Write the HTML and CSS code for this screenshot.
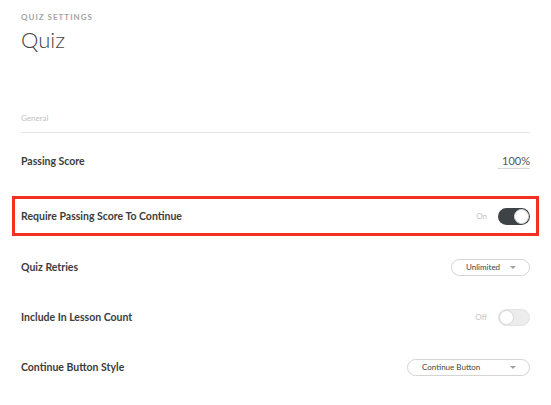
FILE: index.html
```html
<!DOCTYPE html>
<html>
<head>
<meta charset="utf-8">
<link rel="stylesheet" href="styles.css">
</head>
<body>
<div class="page">
  <header class="head">
    <div class="eyebrow">QUIZ SETTINGS</div>
    <h1 class="title">Quiz</h1>
    <div class="section">General</div>
  </header>
  <div class="row row-first">
    <span class="label">Passing Score</span>
    <span class="score">100%</span>
  </div>
  <div class="row row-highlight">
    <span class="label">Require Passing Score To Continue</span>
    <span class="switch-wrap"><span class="state">On</span><span class="toggle on"><span class="knob"></span></span></span>
  </div>
  <div class="row">
    <span class="label">Quiz Retries</span>
    <span class="select select-sm"><span>Unlimited</span><span class="caret"></span></span>
  </div>
  <div class="row">
    <span class="label">Include In Lesson Count</span>
    <span class="switch-wrap"><span class="state">Off</span><span class="toggle off"><span class="knob"></span></span></span>
  </div>
  <div class="row">
    <span class="label">Continue Button Style</span>
    <span class="select select-lg"><span>Continue Button</span><span class="caret"></span></span>
  </div>
</div>
</body>
</html>
```
FILE: styles.css
```css
html, body {
  margin: 0;
  padding: 0;
  background: #fff;
}
body {
  font-family: Lato, "Open Sans", sans-serif;
  color: #3e3e3e;
}
.page {
  display: flex;
  flex-direction: column;
  padding: 10px 21px 0 21px;
}
.head {
  display: flex;
  flex-direction: column;
  border-bottom: 1px solid #e6e6e6;
  padding-bottom: 7px;
}
.eyebrow {
  font-size: 8px;
  line-height: 14px;
  font-weight: 700;
  letter-spacing: 1px;
  color: #a3a3a3;
}
.title {
  margin: 3px 0 0 0;
  font-size: 22px;
  line-height: 26px;
  font-weight: 300;
  color: #444;
}
.section {
  margin-top: 58px;
  font-size: 8px;
  line-height: 14px;
  color: #c2c2c2;
}
.row {
  display: flex;
  align-items: center;
  justify-content: space-between;
  height: 50px;
}
.row-first {
  margin-top: 3px;
}
.row-highlight {
  box-sizing: border-box;
  height: 40px;
  margin: 10px -9px 6px -9px;
  padding: 0 6px;
  border: 3px solid #f2321e;
}
.label {
  font-size: 10.5px;
  font-weight: 700;
  color: #3c3c3c;
}
.score {
  width: 32px;
  text-align: right;
  font-size: 11px;
  color: #555;
  line-height: 15px;
  border-bottom: 1px solid #d8d8d8;
}
.switch-wrap {
  display: flex;
  align-items: center;
  gap: 11px;
}
.state {
  font-size: 8px;
  color: #c4c4c4;
}
.toggle {
  box-sizing: border-box;
  display: flex;
  align-items: center;
  width: 32px;
  height: 17px;
  border-radius: 9px;
  padding: 1px;
}
.toggle.on {
  background: #3d4347;
  justify-content: flex-end;
}
.toggle.off {
  background: #ececec;
  justify-content: flex-start;
  border: 1px solid #e3e3e3;
  padding: 0;
}
.knob {
  box-sizing: border-box;
  width: 15px;
  height: 15px;
  border-radius: 50%;
  background: #fff;
  border: 1px solid #d6d6d6;
}
.select {
  box-sizing: border-box;
  display: flex;
  align-items: center;
  justify-content: space-between;
  height: 17px;
  border: 1px solid #d4d4d4;
  border-radius: 9px;
  padding: 0 13px 0 14px;
  font-size: 8px;
  color: #444;
}
.select-sm {
  width: 79px;
}
.select-lg {
  width: 123px;
}
.caret {
  width: 0;
  height: 0;
  border-left: 3px solid transparent;
  border-right: 3px solid transparent;
  border-top: 3px solid #a0a0a0;
}
```
